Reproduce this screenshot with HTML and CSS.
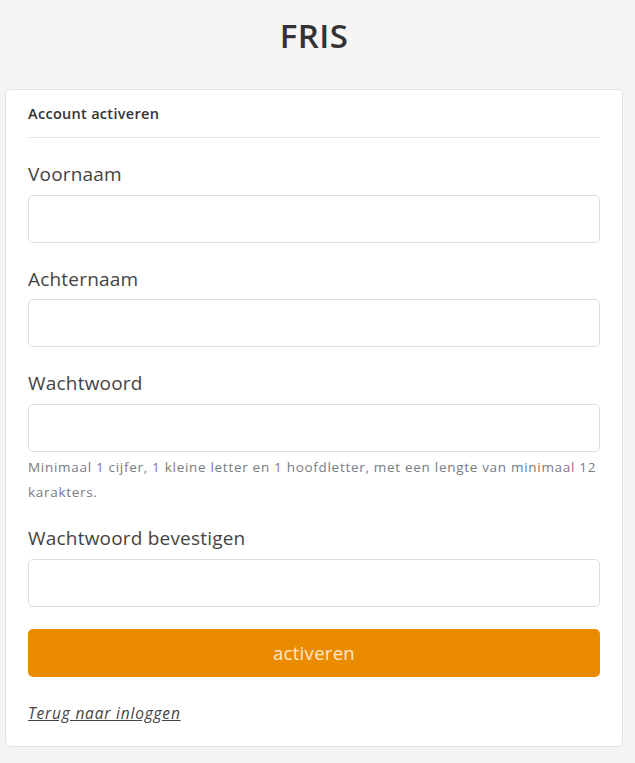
FILE: index.html
```html
<!DOCTYPE html>
<html lang="nl">
<head>
<meta charset="utf-8">
<title>FRIS - Account activeren</title>
<link rel="stylesheet" href="styles.css">
</head>
<body>
<div class="page">
  <h1 class="brand">FRIS</h1>
  <div class="card">
    <div class="card-title">Account activeren</div>
    <form class="form">
      <div class="field">
        <label class="label" for="voornaam">Voornaam</label>
        <input class="input" id="voornaam" type="text">
      </div>
      <div class="field">
        <label class="label" for="achternaam">Achternaam</label>
        <input class="input" id="achternaam" type="text">
      </div>
      <div class="field">
        <label class="label" for="ww">Wachtwoord</label>
        <input class="input" id="ww" type="password">
        <div class="help">Minimaal 1 cijfer, 1 kleine letter en 1 hoofdletter, met een lengte van minimaal 12 karakters.</div>
      </div>
      <div class="field">
        <label class="label" for="ww2">Wachtwoord bevestigen</label>
        <input class="input" id="ww2" type="password">
      </div>
      <button class="btn" type="button">activeren</button>
      <a class="back" href="#">Terug naar inloggen</a>
    </form>
  </div>
</div>
</body>
</html>
```
FILE: styles.css
```css
* { box-sizing: border-box; }
html, body { margin: 0; padding: 0; }
body {
  background: #f6f5f3;
  font-family: "Open Sans", "Liberation Sans", sans-serif;
  color: #3d3d3d;
}
.page {
  width: 618px;
  margin-left: 5px;
  padding-top: 15px;
}
.brand {
  margin: 0;
  text-align: center;
  font-size: 33px;
  line-height: 42px;
  font-weight: 600;
  color: #333;
  letter-spacing: 0.4px;
}
.card {
  margin-top: 32px;
  background: #fff;
  border: 1px solid #dfe4ea;
  border-radius: 5px;
  padding: 12px 22px 23px 22px;
}
.card-title {
  font-size: 14.5px;
  font-weight: 600;
  letter-spacing: 0.3px;
  line-height: 24px;
  color: #333;
  padding-bottom: 11px;
  border-bottom: 1px solid #dfe4ea;
}
.form {
  display: flex;
  flex-direction: column;
}
.field {
  display: flex;
  flex-direction: column;
  margin-top: 23px;
}
.label {
  font-size: 19px;
  letter-spacing: 0.2px;
  line-height: 26px;
  color: #444;
  margin-bottom: 7.5px;
}
.input {
  height: 48px;
  width: 100%;
  border: 1px solid #d9dee4;
  border-radius: 5px;
  background: #fff;
  font: inherit;
  padding: 0 12px;
}
.help {
  font-size: 13.5px;
  letter-spacing: 0.7px;
  line-height: 25px;
  color: #777c82;
  margin-top: 3px;
  margin-bottom: -2.5px;
}
.btn {
  margin-top: 22px;
  height: 48px;
  border: 0;
  border-radius: 5px;
  background: #eb8c00;
  color: rgba(255, 255, 255, 0.82);
  font-family: inherit;
  font-size: 18.5px;
  letter-spacing: 0.3px;
}
.back {
  align-self: flex-start;
  margin-top: 26px;
  font-size: 15.5px;
  letter-spacing: 0.8px;
  line-height: 20px;
  font-style: italic;
  color: #444;
  text-decoration: underline;
}
```
